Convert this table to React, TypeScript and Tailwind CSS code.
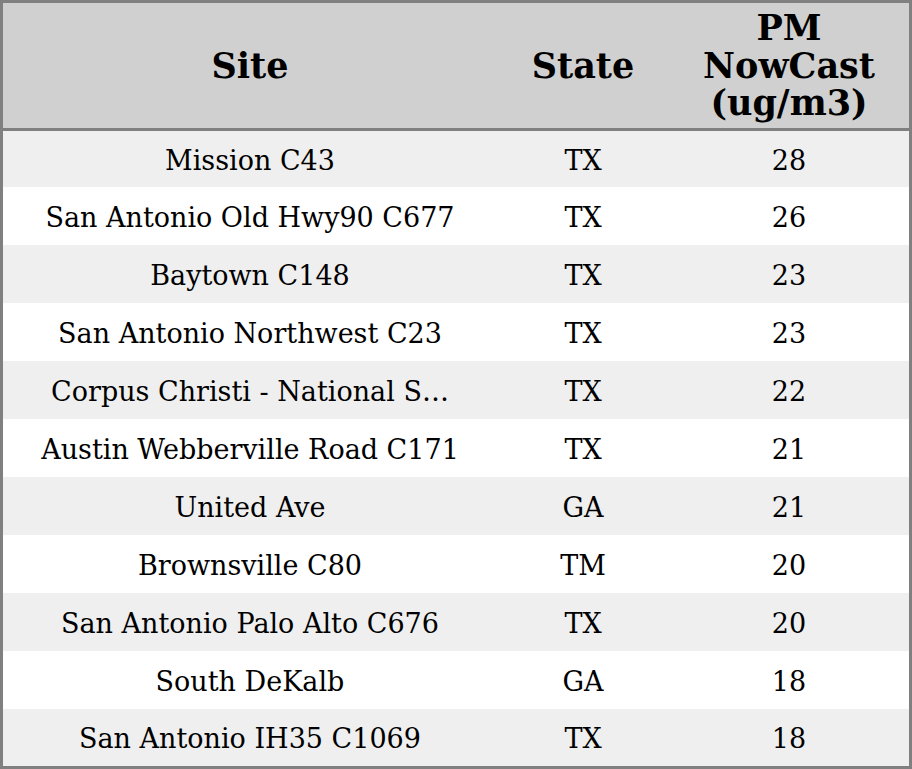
import React from "react";

const rows = [
  { site: "Mission C43", state: "TX", pm: "28" },
  { site: "San Antonio Old Hwy90 C677", state: "TX", pm: "26" },
  { site: "Baytown C148", state: "TX", pm: "23" },
  { site: "San Antonio Northwest C23", state: "TX", pm: "23" },
  { site: "Corpus Christi - National S…", state: "TX", pm: "22" },
  { site: "Austin Webberville Road C171", state: "TX", pm: "21" },
  { site: "United Ave", state: "GA", pm: "21" },
  { site: "Brownsville C80", state: "TM", pm: "20" },
  { site: "San Antonio Palo Alto C676", state: "TX", pm: "20" },
  { site: "South DeKalb", state: "GA", pm: "18" },
  { site: "San Antonio IH35 C1069", state: "TX", pm: "18" },
];

const App = () => {
  return (
    <div className="w-[912px] h-[769px] border-[3px] border-[#808080] bg-white text-black font-['DejaVu_Serif',serif] overflow-hidden">
      {/* header */}
      <div className="grid grid-cols-[494px_172px_240px] h-[125px] bg-[#d0d0d0] border-b-[3px] border-[#808080] box-content text-[35px] font-bold leading-[37.5px] text-center">
        <div className="flex items-center justify-center">Site</div>
        <div className="flex items-center justify-center">State</div>
        <div className="flex items-center justify-center">
          PM
          <br />
          NowCast
          <br />
          (ug/m3)
        </div>
      </div>

      {/* rows */}
      {rows.map((row, index) => (
        <div
          key={index}
          className={
            "grid grid-cols-[494px_172px_240px] items-center text-center text-[27px] pt-[4px] " +
            (index % 2 === 0 ? "bg-[#efefef] " : "bg-white ") +
            (index === 0 ? "h-[56px]" : index === rows.length - 1 ? "h-[57px]" : "h-[58px]")
          }
        >
          <div className="whitespace-nowrap">{row.site}</div>
          <div>{row.state}</div>
          <div>{row.pm}</div>
        </div>
      ))}
    </div>
  );
};

export default App;
